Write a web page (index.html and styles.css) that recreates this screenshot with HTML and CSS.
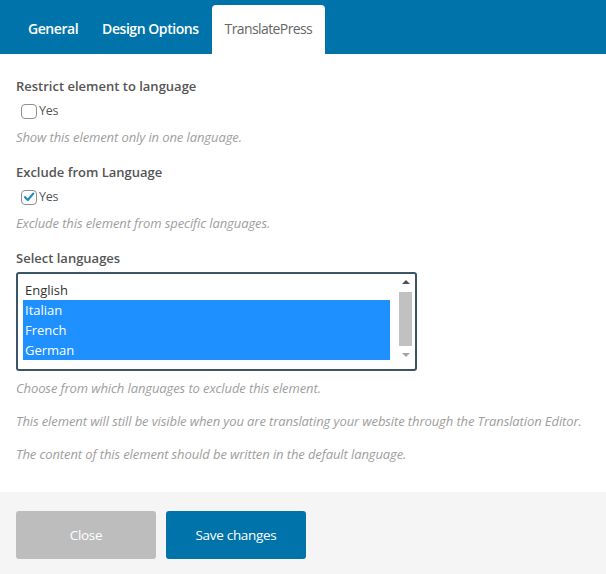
FILE: index.html
```html
<!DOCTYPE html>
<html>
<head>
<meta charset="utf-8">
<link rel="stylesheet" href="styles.css">
</head>
<body>
<div class="tabs">
  <div class="tab">General</div>
  <div class="tab">Design Options</div>
  <div class="tab active">TranslatePress</div>
</div>
<div class="content">
  <div class="field">
    <div class="label">Restrict element to language</div>
    <label class="check"><span class="box"></span>Yes</label>
    <div class="desc">Show this element only in one language.</div>
  </div>
  <div class="field">
    <div class="label">Exclude from Language</div>
    <label class="check"><span class="box checked"><svg width="12" height="12" viewBox="0 0 12 12"><path d="M2 6.2 L4.8 9 L10.2 2.6" fill="none" stroke="#1e8cbe" stroke-width="2.2" stroke-linecap="round" stroke-linejoin="round"/></svg></span>Yes</label>
    <div class="desc">Exclude this element from specific languages.</div>
  </div>
  <div class="field">
    <div class="label">Select languages</div>
    <div class="select">
      <div class="options">
        <div class="opt">English</div>
        <div class="opt sel">Italian</div>
        <div class="opt sel">French</div>
        <div class="opt sel">German</div>
      </div>
      <div class="scroll">
        <span class="arrow up"></span>
        <span class="thumb"></span>
        <span class="arrow down"></span>
      </div>
    </div>
    <div class="desc first">Choose from which languages to exclude this element.</div>
    <div class="desc more">This element will still be visible when you are translating your website through the Translation Editor.</div>
    <div class="desc more">The content of this element should be written in the default language.</div>
  </div>
</div>
<div class="footer">
  <button class="btn close">Close</button>
  <button class="btn save">Save changes</button>
</div>
</body>
</html>
```
FILE: styles.css
```css
* { box-sizing: border-box; }
html, body { margin: 0; padding: 0; }
body {
  width: 606px;
  height: 574px;
  background: #fff;
  font-family: "Open Sans", "Noto Sans", sans-serif;
  color: #444;
  overflow: hidden;
}
.tabs {
  height: 54px;
  background: #0073aa;
  display: flex;
  align-items: flex-end;
  padding-left: 16px;
}
.tab {
  height: 49px;
  padding: 0 12px 2px 12px;
  display: flex;
  align-items: center;
  color: #fff;
  font-size: 14px;
  font-weight: 600;
  letter-spacing: -0.45px;
}
.tab.active {
  background: #fff;
  color: #666;
  font-weight: 400;
  letter-spacing: -0.6px;
  border-radius: 4px 4px 0 0;
  padding: 0 13px 2px 13px;
  margin-left: 1px;
}
.content {
  padding: 24px 16px 0 16px;
  height: 438px;
}
.field { margin-bottom: 18px; }
.label {
  font-size: 13px;
  font-weight: 600;
  color: #555;
  line-height: 16px;
  letter-spacing: 0;
}
.check {
  display: flex;
  align-items: center;
  margin-top: 9px;
  margin-left: 5px;
  font-size: 12.5px;
  color: #555;
  line-height: 16px;
  letter-spacing: -0.3px;
}
.box {
  width: 16px;
  height: 15px;
  border: 1px solid #8c8f94;
  border-radius: 4px;
  margin-right: 2px;
  display: flex;
  align-items: center;
  justify-content: center;
  background: #fff;
}
.desc {
  font-size: 13px;
  font-style: italic;
  color: #9e9e9e;
  margin-top: 10px;
  line-height: 17px;
  letter-spacing: -0.1px;
}
.select {
  margin-top: 6px;
  width: 401px;
  height: 99px;
  border: 2px solid #3a5566;
  border-radius: 3px;
  display: flex;
  padding: 2px 2px 2px 5px;
}
.options { flex: 1; padding-top: 4px; }
.opt {
  height: 20px;
  line-height: 20px;
  font-size: 13px;
  color: #333;
  padding-left: 2px;
  letter-spacing: 0;
  margin-right: 8px;
}
.opt.sel { background: #1e90ff; color: #fff; }
.scroll {
  width: 15px;
  display: flex;
  flex-direction: column;
  align-items: center;
}
.arrow { width: 0; height: 0; border-left: 4px solid transparent; border-right: 4px solid transparent; }
.arrow.up { border-bottom: 4px solid #505050; margin: 4px 0 8px; }
.arrow.down { border-top: 4px solid #a3a3a3; margin-top: 7px; }
.thumb { width: 13px; height: 54px; background: #c1c1c1; }
.desc.first { margin-top: 9px; }
.desc.more { margin-top: 16px; }
.footer {
  height: 82px;
  background: #f5f5f5;
  display: flex;
  gap: 10px;
  padding: 19px 16px 0 16px;
}
.btn {
  width: 140px;
  height: 48px;
  border: none;
  border-radius: 3px;
  color: #fff;
  font-family: "Open Sans", "Noto Sans", sans-serif;
  font-size: 13.5px;
  letter-spacing: -0.3px;
}
.btn.close { background: #bdbdbd; }
.btn.save { background: #0073aa; }
```
